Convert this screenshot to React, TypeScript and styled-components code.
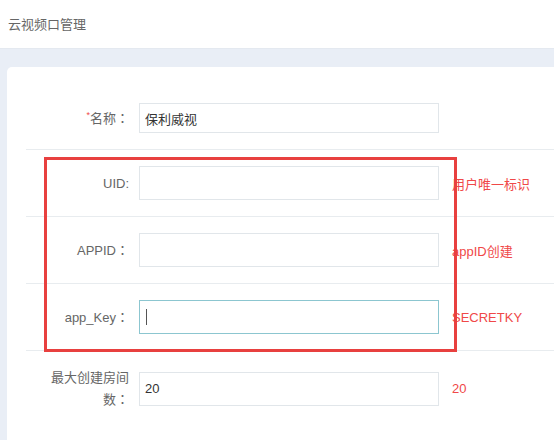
import React from "react";
import styled, { createGlobalStyle } from "styled-components";

const GlobalStyle = createGlobalStyle`
  html, body {
    margin: 0;
    padding: 0;
    background: #e9eef6;
  }
  body {
    font-family: "Liberation Sans", "Noto Sans CJK SC", sans-serif;
    font-size: 13px;
    color: #666;
  }
`;

type Field = {
  label: string;
  colon?: boolean;
  required?: boolean;
  value?: string;
  hint?: string;
  focused?: boolean;
  short?: boolean;
};

const fields: Field[] = [
  { label: "名称", colon: true, required: true, value: "保利威视", short: true },
  { label: "UID:", hint: "用户唯一标识" },
  { label: "APPID", colon: true, hint: "appID创建" },
  { label: "app_Key", colon: true, hint: "SECRETKY", focused: true },
  { label: "最大创建房间数", colon: true, value: "20", hint: "20" },
];

export default function App() {
  return (
    <>
      <GlobalStyle />
      <SPage>
        <SHeader>云视频口管理</SHeader>
        <SBody>
          <SCard>
            <SForm>
              {fields.map((f) => (
                <SRow key={f.label}>
                  <SLabel>
                    {f.required && <SStar>*</SStar>}
                    {f.label}
                    {f.colon && <SColon>：</SColon>}
                  </SLabel>
                  <SInput
                    $short={f.short}
                    $focused={f.focused}
                    defaultValue={f.value}
                    readOnly
                  />
                  {f.focused && <SCaret />}
                  {f.hint && <SHint>{f.hint}</SHint>}
                </SRow>
              ))}
            </SForm>
            <SMark />
          </SCard>
        </SBody>
      </SPage>
    </>
  );
}

const SPage = styled.div`
  width: 554px;
  height: 440px;
  overflow: hidden;
  display: flex;
  flex-direction: column;
`;

const SHeader = styled.div`
  height: 49px;
  flex-shrink: 0;
  box-sizing: border-box;
  background: #fff;
  border-bottom: 1px solid #e4e9f0;
  padding-left: 8px;
  display: flex;
  align-items: center;
  padding-bottom: 1px;
  color: #666;
`;

const SBody = styled.div`
  flex: 1;
  padding: 18px 0 0 7px;
  display: flex;
`;

const SCard = styled.div`
  position: relative;
  flex: 1;
  background: #fff;
  border-radius: 5px 0 0 0;
  padding-top: 20px;
  padding-left: 19px;
`;

const SForm = styled.div`
  display: flex;
  flex-direction: column;
`;

const SRow = styled.div`
  position: relative;
  display: flex;
  align-items: center;
  padding: 16px 0;
  border-bottom: 1px solid #e8ecef;
  &:last-child {
    border-bottom: none;
  }
`;

const SLabel = styled.div`
  width: 103px;
  margin-right: 10px;
  text-align: right;
  line-height: 21px;
  color: #666;
  flex-shrink: 0;
`;

const SColon = styled.span`
  font-family: "Noto Sans CJK TC", sans-serif;
`;

const SStar = styled.span`
  color: #f04848;
  font-size: 9px;
  vertical-align: top;
  line-height: 16px;
`;

const SInput = styled.input<{ $short?: boolean; $focused?: boolean }>`
  box-sizing: border-box;
  width: 300px;
  height: ${(p) => (p.$short ? "30px" : "34px")};
  border: 1px solid ${(p) => (p.$focused ? "#8cc6d0" : "#e1e6ea")};
  border-radius: 0;
  padding: 0 5px;
  font-family: "Liberation Sans", "Noto Sans CJK SC", sans-serif;
  font-size: 13px;
  color: #333;
  outline: none;
  background: #fff;
`;

const SCaret = styled.span`
  position: absolute;
  left: 120px;
  top: 25px;
  width: 1px;
  height: 16px;
  background: #555;
`;

const SHint = styled.div`
  margin-left: 13px;
  color: #f04848;
  white-space: nowrap;
`;

const SMark = styled.div`
  position: absolute;
  left: 37px;
  top: 90px;
  width: 413px;
  height: 195px;
  box-sizing: border-box;
  border: 3px solid #e8403f;
  pointer-events: none;
`;
